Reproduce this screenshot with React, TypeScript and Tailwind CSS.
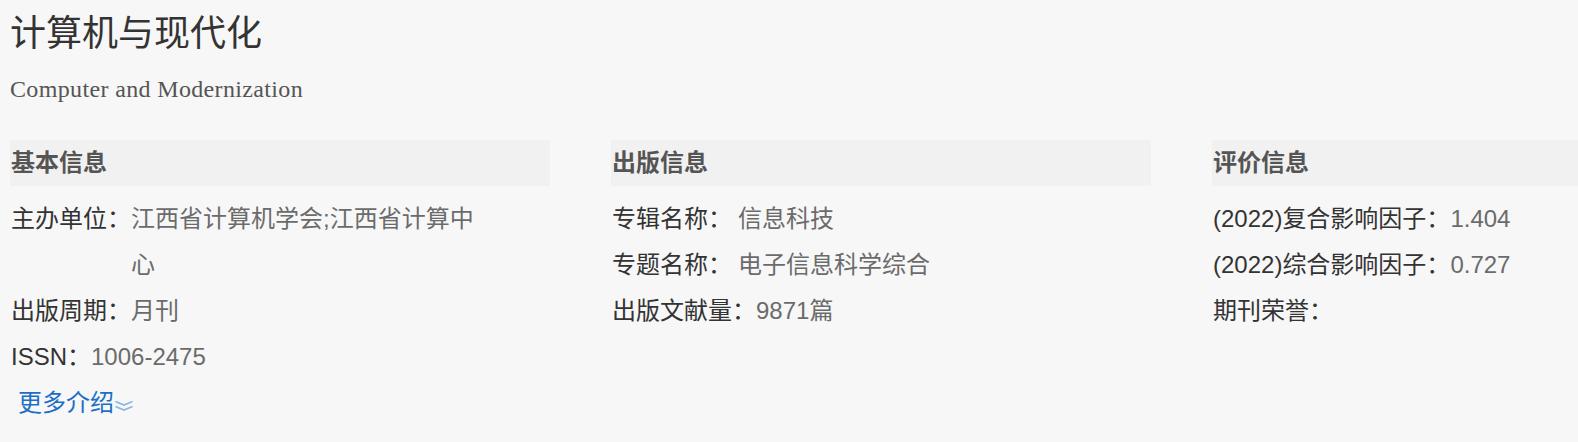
const sans = "font-['Liberation_Sans','Noto_Sans_CJK_SC',sans-serif]";

type Row = { label: string; value?: string; gap?: boolean };

const Section = ({ title, rows, more }: { title: string; rows: Row[]; more?: boolean }) => {
    return (
        <div className="flex flex-col">
            <div className="h-[46px] bg-[#f1f1f1] pl-[1px] text-[24px] leading-[46px] font-bold text-[#555]">{title}</div>
            <div className="mt-[10px] flex flex-col">
                {rows.map((r) => (
                    <div key={r.label} className="pl-[1px] text-[24px] leading-[46px]">
                        <span className="text-[#333]">{r.label}</span>
                        {r.value && (
                            <span className={`inline-block max-w-[350px] align-top text-[#6b6b6b] ${r.gap ? 'ml-[6px]' : ''}`}>
                                {r.value}
                            </span>
                        )}
                    </div>
                ))}
                {more && (
                    <div className="ml-[8px] flex items-center text-[24px] leading-[46px] text-[#1d6fc6]">
                        <span>更多介绍</span>
                        {/* double chevron */}
                        <svg width="20" height="12" viewBox="0 0 20 12" className="mt-[6px]" fill="none" stroke="#8db6e6" strokeWidth="1.8">
                            <path d="M1.5 1.5 L10 5 L18.5 1.5" />
                            <path d="M1.5 6.5 L10 10 L18.5 6.5" />
                        </svg>
                    </div>
                )}
            </div>
        </div>
    );
};

export default function App() {
    return (
        <div className={`h-[442px] w-full overflow-hidden bg-[#f7f7f7] pl-[10px] ${sans}`}>
            <h1 className="pt-[12px] text-[36px] leading-[36px] font-normal text-[#333] font-['Noto_Sans_CJK_SC',serif]">
                计算机与现代化
            </h1>
            <p className="mt-[29px] text-[24px] leading-[24px] tracking-[0.35px] text-[#555] font-['Liberation_Serif',serif]">
                Computer and Modernization
            </p>
            <div className="mt-[39px] grid grid-cols-[540px_540px_540px] gap-x-[61px]">
                <Section
                    title="基本信息"
                    rows={[
                        { label: '主办单位：', value: '江西省计算机学会;江西省计算中心' },
                        { label: '出版周期：', value: '月刊' },
                        { label: 'ISSN：', value: '1006-2475' },
                    ]}
                    more
                />
                <Section
                    title="出版信息"
                    rows={[
                        { label: '专辑名称：', value: '信息科技', gap: true },
                        { label: '专题名称：', value: '电子信息科学综合', gap: true },
                        { label: '出版文献量：', value: '9871篇' },
                    ]}
                />
                <Section
                    title="评价信息"
                    rows={[
                        { label: '(2022)复合影响因子：', value: '1.404' },
                        { label: '(2022)综合影响因子：', value: '0.727' },
                        { label: '期刊荣誉：' },
                    ]}
                />
            </div>
        </div>
    );
}
